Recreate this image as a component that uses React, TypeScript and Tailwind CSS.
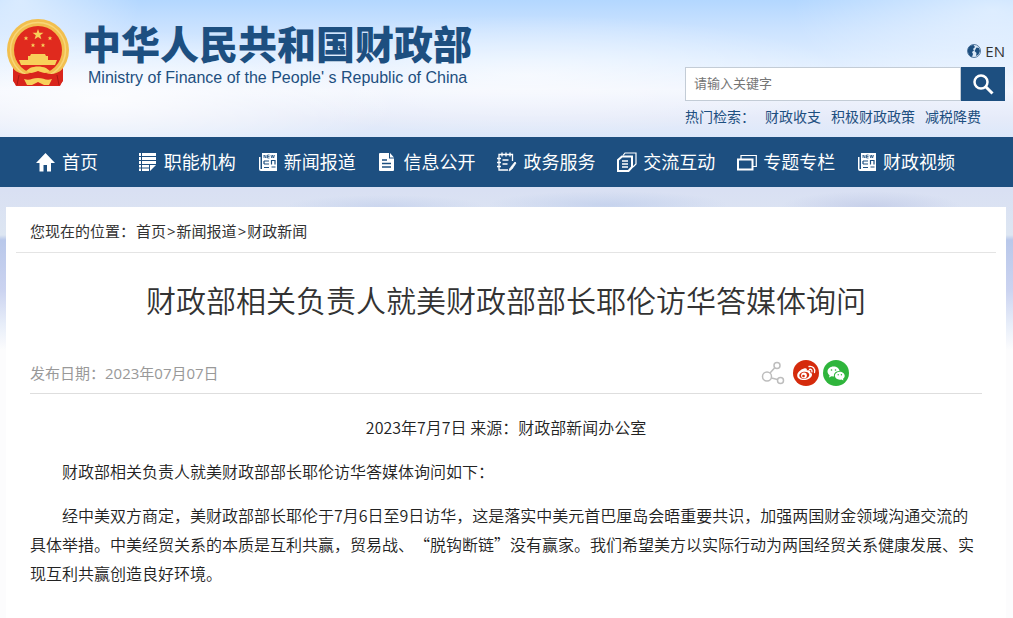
import type { ReactNode } from "react";

const iconClass = "w-5 h-5 shrink-0";

function HomeIcon() {
  return (
    <svg viewBox="0 0 20 20" className={iconClass} fill="currentColor">
      <path d="M9.500 1 0 11h3.500v8.500h4V13h3.500v6.500h4V11H19z" />
    </svg>
  );
}

function ListIcon() {
  return (
    <svg viewBox="0 0 20 20" className={iconClass} fill="currentColor">
      <path d="M1 1h2v3H1zM4 1h14v3H4zM1 5h2v3H1zM4 5h14v3H4zM1 9h2v3H1zM4 9h14v3H4zM1 13h2v2.500H1zM4 13h7v2.500H4zM1 16.500h2V19H1zM4 16.500h7V19H4zM12 13h6l-6 6z" />
    </svg>
  );
}

function NewsIcon() {
  return (
    <svg viewBox="0 0 20 20" className={iconClass}>
      <path fill="currentColor" d="M4 1h15v18H3a2 2 0 0 1-2-2V5h1.500v12H4z" />
      <g stroke="#1d4f80" fill="none">
        <path strokeWidth=".8" d="M6 6V3l2 3V3M11.500 3H9.500v3h2M9.500 4.500h2M13 3l.8 3 .9-3 .9 3 .9-3" />
        <path strokeWidth="1.200" d="M6 9h5M6 12h5M6 15.500h5M6 9v3M13 8.500h4M13.500 8v4.500M17 8v4.500M13.500 15h4" />
      </g>
    </svg>
  );
}

function FileIcon() {
  return (
    <svg viewBox="0 0 20 20" className={iconClass}>
      <path fill="currentColor" d="M2 1h9v5.500h5V18a1 1 0 0 1-1 1H2a1 1 0 0 1-1-1V2a1 1 0 0 1 1-1zM12 1l4 4.500h-4z" />
      <path stroke="#1d4f80" strokeWidth="1.500" d="M4 8h5M4 11.500h9M4 15h9" />
    </svg>
  );
}

function NoteIcon() {
  return (
    <svg viewBox="0 0 20 20" className={iconClass} fill="none" stroke="currentColor" strokeWidth="1.300">
      <path d="M15.500 9V2.500H2v15.500h9M5 .5v4M9 .5v4M13 .5v4M0 6.500h4M0 10.500h4M0 14.500h4M5.500 8h6M5.500 12h5" />
      <path fill="currentColor" strokeWidth=".8" d="m18 10 1 1-4 6-1.500-1.500zM13 16l1.500 1.500-2.500 1.500z" />
    </svg>
  );
}

function PagesIcon() {
  return (
    <svg viewBox="0 0 20 20" className={iconClass} fill="none" stroke="currentColor" strokeWidth="2">
      <path d="M5 4.500h10V15l-3.500 4H1V8z" />
      <path strokeWidth="1.200" d="M6 3.500 8 1h11v11l-3 3" />
      <path strokeWidth="1.500" d="M5 9h6M5 12h6M5 15h6" />
    </svg>
  );
}

function WindowsIcon() {
  return (
    <svg viewBox="0 0 20 20" className={iconClass} fill="none" stroke="currentColor">
      <path strokeWidth="2" d="M1 7.500h14.500V17.500H1z" />
      <path strokeWidth="1.200" d="M4 7V3.500h15.300V14.500H16" />
    </svg>
  );
}

function Emblem() {
  return (
    <svg viewBox="0 0 64 68" className="w-16 h-[68px] shrink-0" role="img" aria-label="国徽">
      <path fill="#d9251c" d="M7 46h50v15l-3 6-11-1-11 1-11-1-11 1-3-6z" />
      <circle cx="32" cy="31" r="31" fill="#f2bf4e" />
      <circle cx="32" cy="31" r="27.500" fill="none" stroke="#f8d678" strokeWidth="1.500" />
      <circle cx="32" cy="31" r="24" fill="#e02a1e" />
      <g fill="#f8d05a">
        <path d="m32 10 1.300 3.800h4.200l-3.300 2.500 1.200 4-3.400-2.400-3.400 2.400 1.200-4-3.300-2.500h4.200z" />
        <path d="m20 17 .7 1.500h1.600L21 19.600l.5 1.600-1.500-1-1.500 1 .5-1.600-1.300-1.100h1.600zM44 17l.7 1.500h1.600L45 19.600l.5 1.600-1.500-1-1.500 1 .5-1.600-1.300-1.100h1.600zM27 24l.7 1.500h1.600L28 26.600l.5 1.600-1.500-1-1.500 1 .5-1.600-1.300-1.100h1.600zM37 24l.7 1.500h1.600L38 26.600l.5 1.600-1.500-1-1.500 1 .5-1.600-1.300-1.100h1.600z" />
        <path d="M25 35h14l1 2h2v4h9l-2 5H15l-2-5h9v-4h2z" />
      </g>
      <path fill="#e02a1e" d="M14 46h36l-7 5c-5-4-17-4-22 0z" />
      <path fill="#d9251c" d="M7 50c6 5 12 6 17 4l8-3 8 3c5 2 11 1 17-4v12l-4 5H11l-4-5z" />
      <g fill="#f8d05a">
        <path d="M24 49c5-2 11-2 16 0l4 3c-4 3-7 2-12 0-5 2-8 3-12 0z" />
        <path d="M18 60c6 2 8-1 14-1s8 3 14 1l-3 6h-5l-6-3-6 3h-5z" />
      </g>
      <path fill="none" stroke="#a91a14" strokeWidth="1" d="M13 56l-2 10M51 56l2 10" />
    </svg>
  );
}

function GlobeIcon() {
  return (
    <svg viewBox="0 0 14 14" className="w-3.5 h-3.5">
      <circle cx="7" cy="7" r="6.500" fill="#dbe9f7" stroke="#54799f" strokeWidth="1" />
      <path fill="#1d4f80" d="M1 5c1-3 3-4 5.500-4L8 3 6 5l1 1.500L5 8l1 2-1 3C2 12 .5 9 1 5zM9.500 3.500 12 4l1 3-1.500 3.500L9 12l.5-3-2-2z" />
    </svg>
  );
}

function ShareIcon() {
  return (
    <svg viewBox="0 0 24 24" className="w-6 h-6" fill="none" stroke="#bdbdbd" strokeWidth="1.500">
      <circle cx="6" cy="15.500" r="4.500" />
      <circle cx="16" cy="4.500" r="3" />
      <circle cx="19.500" cy="19.500" r="3" />
      <path d="m9 12 5-5.500M10.500 17l6 1.500" />
    </svg>
  );
}

function WeiboIcon() {
  return (
    <svg viewBox="0 0 26 26" className="w-[26px] h-[26px]">
      <circle cx="13" cy="13" r="13" fill="#d52b0c" />
      <path fill="#fff" d="M11 8.500c2-.8 3.300 0 2.800 2 2.500-.8 4 0 3.400 2 1.600.5 2.200 1.600 1.700 3-.8 2.600-4.200 4.500-7.900 4.500-3.800 0-6.800-1.800-6.800-4.600C4.200 12.600 7.500 9.500 11 8.500z" />
      <ellipse cx="11.300" cy="15.300" rx="5" ry="3.600" fill="#d52b0c" transform="rotate(-8 11.300 15.300)" />
      <circle cx="11" cy="15.500" r="2.900" fill="#fff" />
      <circle cx="10.500" cy="16" r="1.300" fill="#d52b0c" />
      <path fill="none" stroke="#fff" strokeWidth="1.300" strokeLinecap="round" d="M16 6.500c3.800-.8 6.500 2.200 5.500 6M16.500 9.300c1.800-.3 2.800 1 2.400 2.600" />
    </svg>
  );
}

function WechatIcon() {
  return (
    <svg viewBox="0 0 26 26" className="w-[26px] h-[26px]">
      <circle cx="13" cy="13" r="13" fill="#2fb53c" />
      <path fill="#fff" d="M10.500 6.500c3.300 0 5.800 2 6 4.500-3.500 0-6 2.200-5.500 5.500l-2.500-.3L6 17.500l.6-2.200C5.300 14.300 4.500 13 4.500 11.500c0-2.800 2.700-5 6-5z" />
      <path fill="#fff" d="M16.800 11.800c2.700 0 4.900 1.800 4.900 4 0 1.300-.7 2.300-1.700 3l.4 1.700-1.900-1c-3.600.8-6.600-1-6.600-3.700 0-2.200 2.200-4 4.900-4z" />
      <g fill="#2fb53c">
        <circle cx="8.500" cy="10" r=".8" />
        <circle cx="12.500" cy="10" r=".8" />
        <circle cx="15.200" cy="14.800" r=".7" />
        <circle cx="18.400" cy="14.800" r=".7" />
      </g>
    </svg>
  );
}

const navItems: { label: string; icon: ReactNode }[] = [
  { label: "首页", icon: <HomeIcon /> },
  { label: "职能机构", icon: <ListIcon /> },
  { label: "新闻报道", icon: <NewsIcon /> },
  { label: "信息公开", icon: <FileIcon /> },
  { label: "政务服务", icon: <NoteIcon /> },
  { label: "交流互动", icon: <PagesIcon /> },
  { label: "专题专栏", icon: <WindowsIcon /> },
  { label: "财政视频", icon: <NewsIcon /> },
];

const hotWords = ["财政收支", "积极财政政策", "减税降费"];

const paragraphs = [
  "财政部相关负责人就美财政部部长耶伦访华答媒体询问如下：",
  "经中美双方商定，美财政部部长耶伦于7月6日至9日访华，这是落实中美元首巴厘岛会晤重要共识，加强两国财金领域沟通交流的具体举措。中美经贸关系的本质是互利共赢，贸易战、“脱钩断链”没有赢家。我们希望美方以实际行动为两国经贸关系健康发展、实现互利共赢创造良好环境。",
];

export default function App() {
  return (
    <div
      lang="zh-CN"
      className="min-h-screen font-['Open_Sans','Noto_Sans_CJK_SC',sans-serif] [text-spacing-trim:space-all] text-[#333] bg-[radial-gradient(ellipse_300px_70px_at_10%_100px,rgba(255,255,255,0.8),transparent),radial-gradient(ellipse_320px_60px_at_52%_75px,rgba(255,255,255,0.6),transparent),radial-gradient(ellipse_120px_80px_at_2%_0px,rgba(255,255,255,0.5),transparent),radial-gradient(ellipse_200px_90px_at_98%_10px,rgba(255,255,255,0.5),transparent),radial-gradient(ellipse_120px_14px_at_60%_205px,rgba(190,205,235,0.7),transparent),radial-gradient(ellipse_90px_16px_at_86%_207px,rgba(190,200,230,0.7),transparent),radial-gradient(ellipse_100px_12px_at_38%_207px,rgba(195,208,236,0.7),transparent),linear-gradient(#b3d7ff_0px,#cae2ff_28px,#deedff_60px,#f1f5fe_90px,#e6ebf9_118px,#dce8fa_137px,#d9e0f3_190px,#dde6f2_235px,#b9c8ea_240px,#cbd3f0_290px,#e8eef9_325px,#fcfcfd_350px)]"
    >
      {/* Header */}
      <header className="h-[137px] flex justify-between pl-1.5 pr-2">
        <div className="flex pt-[19px] gap-3">
          <Emblem />
          <div className="pt-px text-[#1d4f80] whitespace-nowrap">
            <h1 className="text-[39px] leading-[48px] font-black">中华人民共和国财政部</h1>
            <p className="pl-1.5 font-['Liberation_Sans',sans-serif] text-base leading-5">
              Ministry of Finance of the People' s Republic of China
            </p>
          </div>
        </div>

        <div className="w-80 pt-[41px]">
          <div className="flex justify-end">
            <a href="#" className="flex items-center gap-1 text-[15px] leading-5">
              <GlobeIcon />
              EN
            </a>
          </div>
          <form className="mt-1.5 flex h-[34px]" onSubmit={(e) => e.preventDefault()}>
            <input
              type="text"
              aria-label="请输入关键字"
              placeholder="请输入关键字"
              className="flex-1 min-w-0 bg-white border border-[#c3ccd6] px-2 text-[13px] placeholder:text-[#757575] outline-none"
            />
            <button type="submit" aria-label="搜索" className="w-11 bg-[#1d4f80] flex items-center justify-center">
              <svg viewBox="0 0 24 24" className="w-6 h-6" fill="none" stroke="#fff">
                <circle cx="10" cy="10" r="6.500" strokeWidth="2.500" />
                <path d="m14.500 14.500 7 7" strokeWidth="3" />
              </svg>
            </button>
          </form>
          <div className="mt-1.5 flex text-sm leading-5 text-[#1d4f80] whitespace-nowrap">
            <span className="w-20">热门检索：</span>
            <div className="flex gap-[10px]">
              {hotWords.map((word) => (
                <a key={word} href="#">{word}</a>
              ))}
            </div>
          </div>
        </div>
      </header>

      {/* Nav */}
      <nav className="h-[50px] bg-[#1d4f80] text-white">
        <ul className="mx-[7px] h-full flex">
          {navItems.map((item) => (
            <li key={item.label} className="w-[12%]">
              <a href="#" className="h-full flex items-center justify-center gap-1.5 text-lg whitespace-nowrap">
                {item.icon}
                <span>{item.label}</span>
              </a>
            </li>
          ))}
        </ul>
      </nav>

      {/* Article */}
      <main className="mt-5 ml-1.5 mr-[7px] bg-white px-2.5 pb-8">
        <div className="px-[14px] pt-1 h-[46px] flex items-center gap-px text-[15px] border-b border-[#e4e4e4]">
          <span>您现在的位置：</span>
          <a href="#">首页</a>
          <span>&gt;</span>
          <a href="#">新闻报道</a>
          <span>&gt;</span>
          <a href="#">财政新闻</a>
        </div>

        <article className="px-[14px]">
          <h2 className="mt-7 text-center text-3xl leading-10 font-[350]">
            财政部相关负责人就美财政部部长耶伦访华答媒体询问
          </h2>
          <div className="mt-8 h-[41px] flex items-center justify-between border-b border-[#dedede] text-[15px] text-[#999]">
            <span>发布日期：2023年07月07日</span>
            <div className="flex items-center gap-1 mr-[14%]">
              <button type="button" aria-label="分享" className="mr-1"><ShareIcon /></button>
              <button type="button" aria-label="微博"><WeiboIcon /></button>
              <button type="button" aria-label="微信"><WechatIcon /></button>
            </div>
          </div>

          <div className="mt-[19px] space-y-[15px] font-['Noto_Sans_CJK_SC',sans-serif] font-[350] text-base leading-[29px] text-[#222]">
            <p className="text-center">2023年7月7日 来源：财政部新闻办公室</p>
            {paragraphs.map((text) => (
              <p key={text} className="indent-8">{text}</p>
            ))}
          </div>
        </article>
      </main>
    </div>
  );
}
